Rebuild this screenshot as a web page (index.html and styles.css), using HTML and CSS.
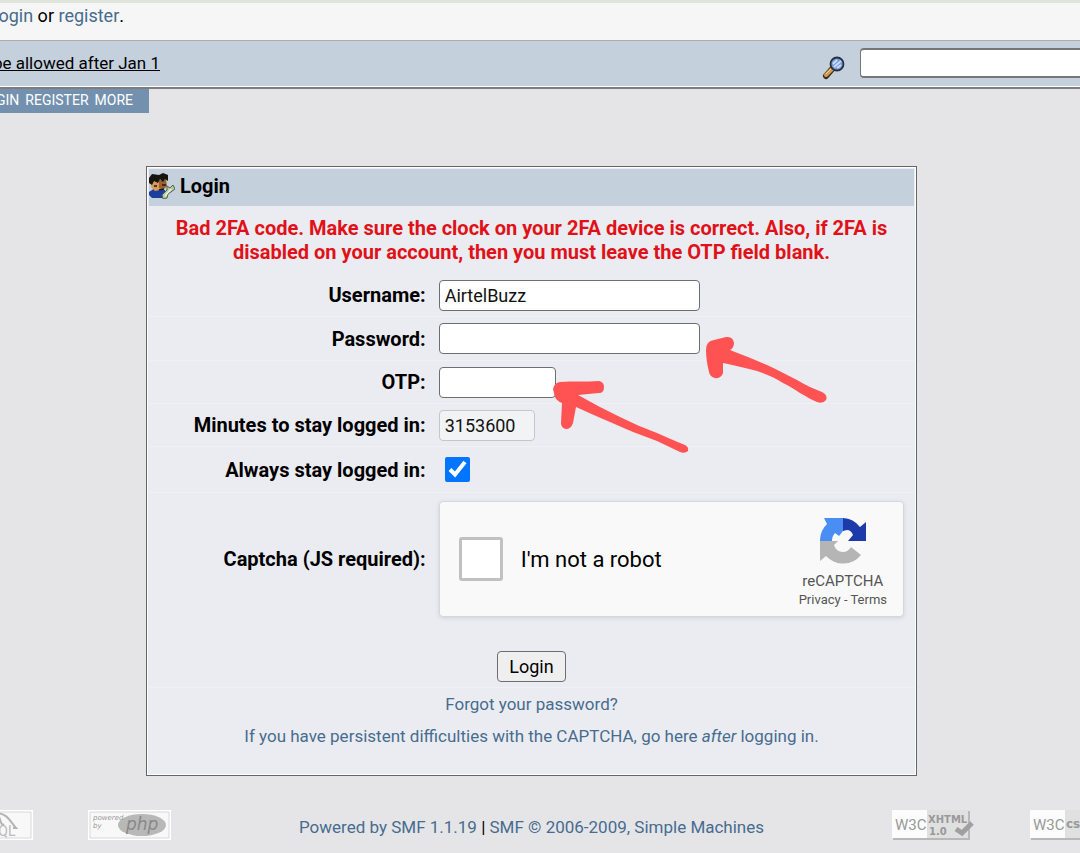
FILE: index.html
```html
<!DOCTYPE html>
<html lang="en">
<head>
  <meta charset="UTF-8">
  <meta name="viewport" content="width=device-width, initial-scale=1.0">
  <title>Login</title>
  <link rel="stylesheet" href="styles.css">
</head>
<body>
  <header>
    <div class="userbar">
      <p class="welcome"><a href="#">login</a> or <a href="#">register</a>.</p>
    </div>
    <div class="newsbar">
      <p class="news"><a href="#">be allowed after Jan 1</a></p>
      <form class="search">
        <svg class="search-icon" viewBox="0 0 24 24" aria-hidden="true">
          <path d="M4 20L11 12" stroke="#3b2a1c" stroke-width="6" stroke-linecap="round"/>
          <path d="M4 19L10 13" stroke="#d29a50" stroke-width="4" stroke-linecap="round"/>
          <path d="M4 18L9 13" stroke="#f0cc8c" stroke-width="1"/>
          <circle cx="15" cy="8" r="6.5" fill="#7c9bdc" stroke="#26303f" stroke-width="1.8"/>
          <path d="M11 8L15 4M12 11L19 5M15 12L19 9" stroke="#c9dafa" stroke-width="1.8"/>
        </svg>
        <input type="text" class="search-box" aria-label="Search">
      </form>
    </div>
    <nav class="menu">
      <a href="#">LOGIN</a>
      <a href="#">REGISTER</a>
      <a href="#">MORE</a>
    </nav>
  </header>

  <main>
    <form class="login-box">
      <h1 class="titlebar">
        <svg class="user-icon" viewBox="0 0 26 26" aria-hidden="true">
          <path d="M0 19L6 15L16 17L18 25H3L0 22Z" fill="#1b3f9c"/>
          <path d="M3 7L10 6L11 17L6 18L2 14Z" fill="#d99a58"/>
          <path d="M10 7L17 6L18 13L14 17L10 15Z" fill="#9a6230"/>
          <path d="M0 5L3 1L10 2L14 0L19 2V8L16 6L14 9L11 6L9 10L5 8L3 12L0 10Z" fill="#17130f"/>
          <path d="M13 12H17M5 13H8M10 17L15 16" stroke="#241812" stroke-width="1.5"/>
          <path d="M13 22L18 17L18 13L21 15L24 12L26 16L22 19L19 21L18 25L14 26Z" fill="#b7c9a4" stroke="#53634a"/>
          <path d="M16 23L22 16" stroke="#eef4dc" stroke-width="1.5"/>
        </svg>
        Login
      </h1>
      <p class="error">Bad 2FA code. Make sure the clock on your 2FA device is correct. Also, if 2FA is disabled on your account, then you must leave the OTP field blank.</p>

      <div class="row">
        <label for="user">Username:</label>
        <div><input type="text" id="user" class="field" value="AirtelBuzz"></div>
      </div>
      <div class="row row-tall">
        <label for="password">Password:</label>
        <div><input type="password" id="password" class="field"></div>
      </div>
      <div class="row">
        <label for="otp">OTP:</label>
        <div><input type="text" id="otp" class="field field-otp"></div>
      </div>
      <div class="row">
        <label for="minutes">Minutes to stay logged in:</label>
        <div><input type="text" id="minutes" class="field field-minutes" value="3153600" disabled></div>
      </div>
      <div class="row row-always">
        <label for="always">Always stay logged in:</label>
        <div><input type="checkbox" id="always" class="always" checked></div>
      </div>
      <div class="row row-captcha">
        <span class="caption">Captcha (JS required):</span>
        <div class="captcha">
          <input type="checkbox" id="robot" class="robot">
          <label for="robot">I'm not a robot</label>
          <div class="brand">
            <svg class="brand-logo" viewBox="0 0 46 47" aria-hidden="true">
              <path d="M0 23A23 23 0 0 1 7 6L4 0H23V13L19 18L15 15Q12 18 12 23Z" fill="#4a8ef4"/>
              <path d="M23 0A23 23 0 0 1 40 9L46 4V23H28L33 17Q31 12 27 12L23 13Z" fill="#1c3aa9"/>
              <path d="M0 23H18L14 27Q16 34 23 34Q28 34 31 29L41 37A23 23 0 0 1 6 38L0 43Z" fill="#b5b5b5"/>
            </svg>
            <span class="brand-name">reCAPTCHA</span>
            <span class="brand-links"><a href="#">Privacy</a> - <a href="#">Terms</a></span>
          </div>
        </div>
      </div>

      <div class="actions"><button type="submit">Login</button></div>
      <p class="link"><a href="#">Forgot your password?</a></p>
      <p class="link"><a href="#">If you have persistent difficulties with the CAPTCHA, go here <i>after</i> logging in.</a></p>

      <!-- arrows pointing at the password and OTP fields -->
      <svg class="arrows" viewBox="0 0 300 130" aria-hidden="true">
        <path d="M153 14Q153 5 161 4L173 1Q180 0 181 7Q181 12 177 14C190 19 202 24 214 29C225 34 234 39 244 44C252 49 261 53 269 56Q275 59 273 64Q270 68 264 66C252 61 242 53 230 47C222 42 213 38 204 35C192 32 181 29 170 27L170 37Q168 43 162 42Q157 41 156 36Q153 24 153 14Z"/>
        <path d="M0 53Q1 47 7 46C20 45 34 46 46 45Q51 46 51 51Q51 57 46 57C38 58 32 58 25 59C39 67 53 74 67 81C79 87 91 92 104 97C113 101 122 105 132 109Q136 111 135 115Q132 118 127 116L104 105C88 99 72 93 57 86C45 81 34 76 23 71L20 87Q18 93 13 93Q8 92 8 87L9 67Q4 65 2 61Z"/>
      </svg>
    </form>
  </main>

  <footer>
    <div class="badges badges-left">
      <svg class="badge" viewBox="0 0 83 30" role="img" aria-label="MySQL">
        <path d="M0 0H83V30H0Z" fill="#fff"/>
        <path d="M2 2H81V28H2Z" fill="#f8f8f8" stroke="#d8d8d8"/>
        <path d="M46 3C58 3 61 13 66 18L63 18M49 7C51 11 51 16 54 14" fill="none" stroke="#b4b4b4" stroke-width="2"/>
        <text x="40" y="26" class="badge-sql">SQL</text>
      </svg>
      <svg class="badge" viewBox="0 0 83 30" role="img" aria-label="Powered by PHP">
        <path d="M0 0H83V30H0Z" fill="#fff"/>
        <path d="M2 2H81V28H2Z" fill="#f8f8f8" stroke="#d8d8d8"/>
        <ellipse cx="54" cy="15" rx="24" ry="11" fill="#b8b8b8"/>
        <text x="5" y="10" class="badge-small">powered</text>
        <text x="5" y="18" class="badge-small">by</text>
        <text x="38" y="20" class="badge-php">php</text>
      </svg>
    </div>
    <p class="copyright"><a href="#">Powered by SMF 1.1.19</a> | <a href="#">SMF © 2006-2009, Simple Machines</a></p>
    <div class="badges badges-right">
      <svg class="badge" viewBox="0 0 83 30" role="img" aria-label="Valid XHTML 1.0">
        <path d="M1 1H78V30H1Z" fill="#b8b8b8"/>
        <path d="M0 0H76V28H0Z" fill="#e0e0e0"/>
        <path d="M0 0H35V28H0Z" fill="#fcfcfc"/>
        <text x="3" y="20" class="badge-w3c">W3C</text>
        <text x="36" y="13" class="badge-bold">XHTML</text>
        <text x="37" y="25" class="badge-bold">1.0</text>
        <path d="M64 19L70 23L80 13" fill="none" stroke="#a0a0a0" stroke-width="5"/>
      </svg>
      <svg class="badge" viewBox="0 0 83 30" role="img" aria-label="Valid CSS">
        <path d="M1 1H78V30H1Z" fill="#b8b8b8"/>
        <path d="M0 0H76V28H0Z" fill="#e0e0e0"/>
        <path d="M0 0H35V28H0Z" fill="#fcfcfc"/>
        <text x="3" y="20" class="badge-w3c">W3C</text>
        <text x="36" y="18" class="badge-bold badge-css">css</text>
      </svg>
    </div>
  </footer>
</body>
</html>
```

FILE: styles.css
```css
* { box-sizing: border-box; }
body { margin: 0; background-color: #e5e5e8; color: #000; font-family: Roboto, "Liberation Sans", sans-serif; font-size: 17px; overflow-x: hidden; }
a { color: #476c8e; text-decoration: none; }
p { margin: 0; }

/* top bars */
header { background: linear-gradient(#7d7d7d, #7d7d7d) 0 87px / 100% 2px no-repeat; }
.userbar { height: 41px; padding-top: 3px; background-color: #f6f6f6; border-top: 3px solid #dfe5db; border-bottom: 1px solid #adadad; }
.welcome, .news { display: flex; justify-content: flex-end; white-space: pre; overflow: hidden; line-height: 20px; }
.welcome { width: 124px; font-size: 18px; }
.newsbar { display: flex; align-items: center; height: 46px; padding-bottom: 2px; background-color: #c4d1dc; border-bottom: 1px solid #fff; }
.news { width: 160px; }
.news a { color: #000; text-decoration: underline; }
.search { display: flex; align-items: center; gap: 14px; margin-left: auto; }
.search-icon { width: 24px; height: 24px; margin-top: 10px; }
.search-box { width: 220px; height: 30px; border: 1px solid #767676; border-width: 2px 0 2px 1px; border-radius: 4px 0 0 4px; background-color: #fff; }
.menu { display: flex; justify-content: flex-end; gap: 6px; width: 149px; height: 24px; margin-top: 2px; padding-right: 16px; background-color: #7391ae; line-height: 22px; font-size: 14px; overflow: hidden; }
.menu a { color: #fff; }

/* login form */
main { padding: 53px 163px 0 146px; }
.login-box { position: relative; padding: 2px 2px 23px; border: 1px solid #666; background-color: #ebecf2; box-shadow: inset 0 0 0 1px #fff; }
.titlebar { display: flex; align-items: center; gap: 5px; height: 37px; margin: 0; padding-bottom: 3px; background-color: #c4d1dc; font-size: 20px; }
.user-icon { width: 26px; height: 26px; }
.error { padding: 10px 16px; color: #e01218; font-size: 20px; font-weight: bold; line-height: 24px; text-align: center; }
.row { display: grid; grid-template-columns: 36% 1fr; gap: 13px; align-items: center; height: 43px; padding-left: 2px; border-bottom: 1px solid #f0f1f5; }
.row > label, .caption { font-size: 20px; font-weight: bold; text-align: right; white-space: nowrap; }
.row > div { display: flex; align-items: center; }
.field { width: 261px; height: 31px; padding: 0 5px; border: 1px solid #6e6e70; border-radius: 4px; background-color: #fff; color: #111; font: 18px Roboto, "Liberation Sans", sans-serif; }
.field-otp { width: 117px; }
.field-minutes { width: 96px; border-color: #c5c6ca; background-color: #f2f3f5; }
.always { width: 25px; height: 25px; margin: 0 6px; accent-color: #0075ff; }
.row-tall { height: 44px; }
.row-always { height: 46px; }
.row-captcha { height: 132px; border-bottom: 0; }
.captcha { height: 116px; margin-right: 10px; padding: 0 16px 0 19px; border: 1px solid #d6d7db; border-radius: 4px; background-color: #f9f9f9; box-shadow: 0 1px 4px #d0d1d6; }
.robot { appearance: none; width: 44px; height: 44px; margin: 0 18px 0 0; border: 3px solid #c1c1c1; border-radius: 3px; background-color: #fff; }
.captcha label { font-size: 22px; }
.brand { display: flex; flex-direction: column; align-items: center; margin-left: auto; padding-top: 8px; color: #555; }
.brand-logo { width: 46px; height: 47px; }
.brand-name { margin-top: 6px; font-size: 15px; line-height: 20px; }
.brand-links { font-size: 13px; line-height: 18px; white-space: pre; }
.brand-links a { color: #555; }
.actions { display: flex; justify-content: center; padding: 26px 0 5px; border-bottom: 1px solid #f0f1f5; }
button { height: 31px; padding: 0 11px; border: 1px solid #6e6e70; border-radius: 4px; background-color: #efefef; color: #000; font: 18px Roboto, "Liberation Sans", sans-serif; cursor: pointer; }
.link { line-height: 32px; text-align: center; }
.arrows { position: absolute; top: 169px; left: 406px; width: 300px; height: 130px; fill: #ff5252; pointer-events: none; }

/* footer */
footer { display: flex; align-items: center; padding-top: 34px; }
.badges { display: flex; gap: 55px; overflow: hidden; }
.badges-left { justify-content: flex-end; width: 171px; }
.badges-right { width: 188px; }
.badge { flex: none; width: 83px; height: 30px; }
.copyright { flex: 1; padding-top: 4px; text-align: center; }
.badge text { fill: #999; font-family: Roboto, sans-serif; }
.badge .badge-sql { font-size: 14px; fill: #bbb; }
.badge .badge-small { font: italic 7px "DejaVu Sans", sans-serif; }
.badge .badge-php { font: italic 17px "DejaVu Sans", sans-serif; fill: #888; }
.badge .badge-w3c { font-size: 15px; }
.badge .badge-bold { font: bold 10px "DejaVu Sans", sans-serif; }
.badge .badge-css { font-size: 12px; }
```
